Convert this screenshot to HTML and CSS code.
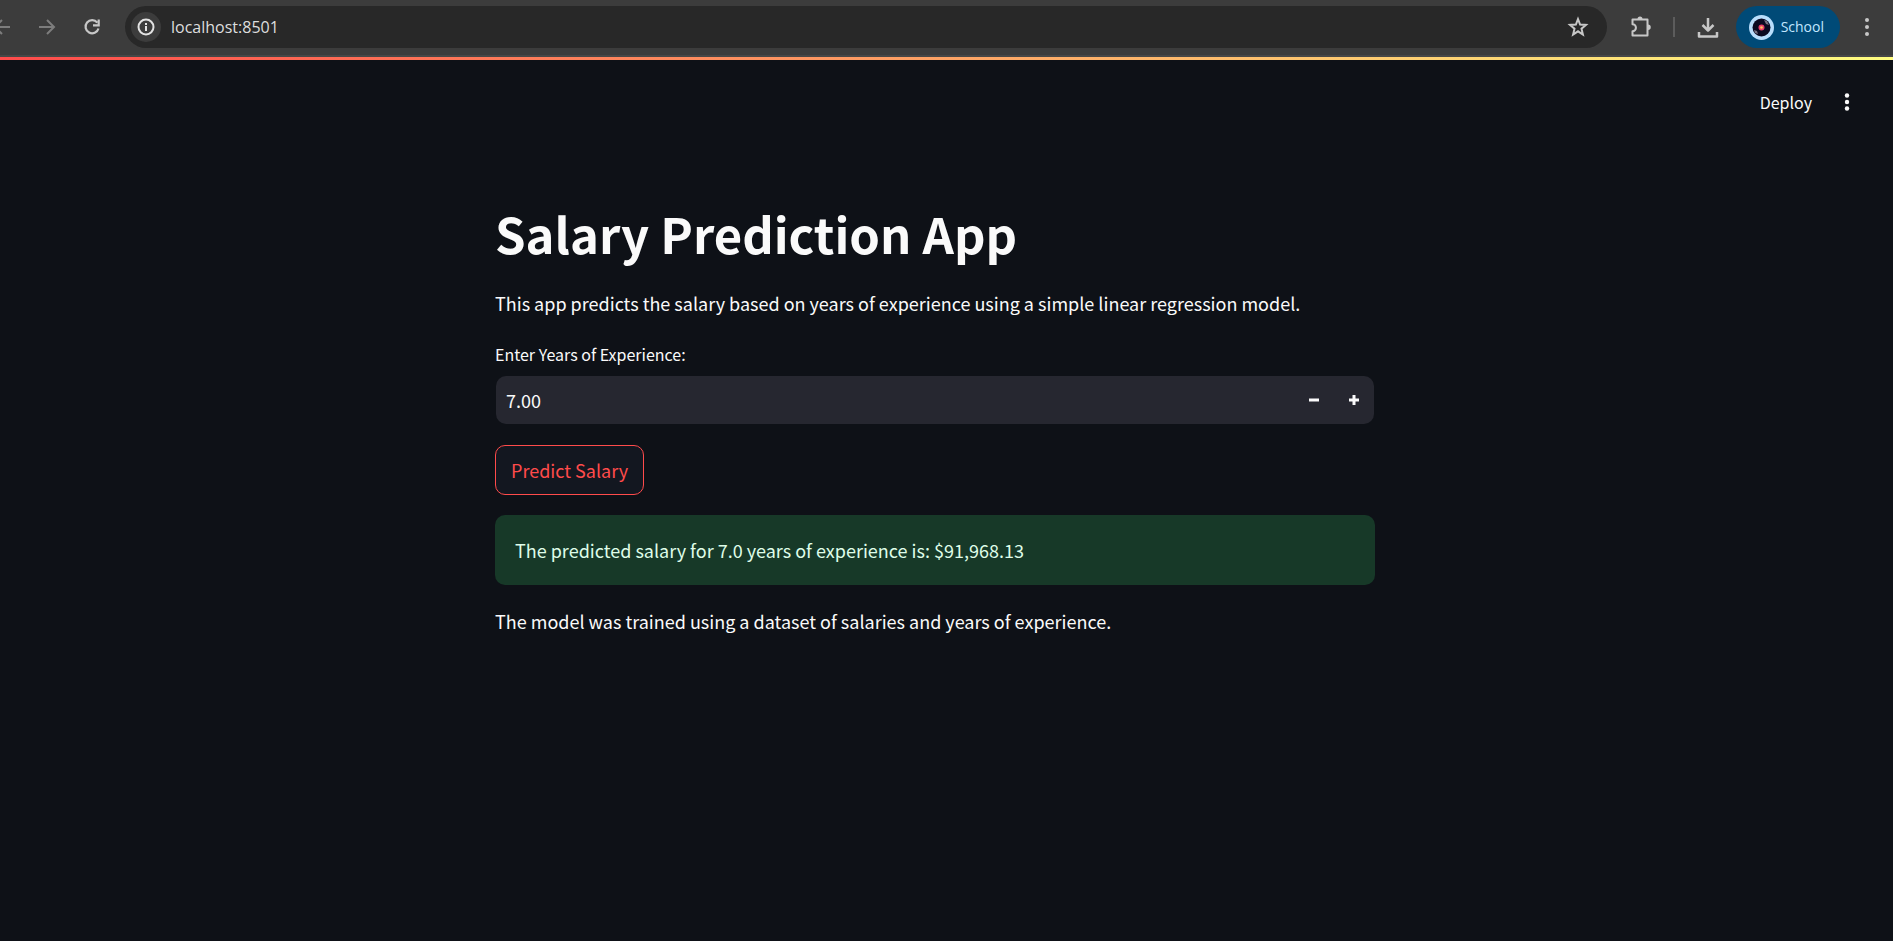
FILE: index.html
```html
<!DOCTYPE html>
<html lang="en">
<head>
<meta charset="utf-8">
<title>Salary Prediction App</title>
<link rel="stylesheet" href="styles.css">
</head>
<body>
<header class="browser-bar">
  <nav class="nav-buttons" aria-label="Navigation">
    <button class="icon-button dim" aria-label="Back"><svg width="20" height="20" viewBox="0 0 20 20"><path d="M18 10H3M10 3L3 10l7 7"/></svg></button>
    <button class="icon-button dim" aria-label="Forward"><svg width="20" height="20" viewBox="0 0 20 20"><path d="M2 10h15M10 3l7 7-7 7"/></svg></button>
    <button class="icon-button" aria-label="Reload"><svg width="20" height="20" viewBox="0 0 20 20"><path d="M15.300 5.600A6.600 6.600 0 1 0 16.500 11.500M16.700 2.500v5.800H11" stroke-width="2.200"/></svg></button>
  </nav>
  <div class="address">
    <button class="site-info" aria-label="Site information"><svg width="18" height="18" viewBox="0 0 18 18"><circle cx="9" cy="9" r="7.500"/><path d="M9 8v5M9 5v2"/></svg></button>
    <input class="url" type="text" aria-label="Address" value="localhost:8501">
    <button class="icon-button" aria-label="Bookmark"><svg width="22" height="22" viewBox="0 0 22 22"><path d="M11 3l2.100 5.500 5.900.4-4.500 3.800 1.400 5.800L11 15.300l-4.900 3.200 1.400-5.800L3 8.900l5.900-.4z"/></svg></button>
  </div>
  <div class="tools">
    <button class="icon-button" aria-label="Extensions"><svg width="24" height="24" viewBox="0 0 24 24"><path d="M3.500 4.500h15V20.500h-15V16.200a3.200 3.200 0 0 0 0-6.900z" stroke-linejoin="round"/><path class="solid" d="M8.500 4a2.500 2.500 0 0 1 5 0zM19 9.500a2.500 2.500 0 0 1 0 5.500z"/></svg></button>
    <span class="divider"></span>
    <button class="icon-button download" aria-label="Downloads"><svg width="22" height="22" viewBox="0 0 22 22" stroke-linejoin="round"><path d="M11 2v12M5.500 9l5.500 5.500L16.500 9M2 16v4.500h18V16" stroke-width="2.500"/></svg></button>
    <button class="profile"><svg width="25" height="25" viewBox="0 0 25 25"><circle cx="12.500" cy="12.500" r="12.500" fill="#b9defc"/><circle cx="12.500" cy="12.500" r="9" fill="#0b0920"/><path d="M15 5l3 1 2 4-3-1zM5 15l3 1 1 3-3-1z" fill="#777180"/><circle cx="12.500" cy="12.500" r="3" fill="#e83e68"/><circle cx="12.500" cy="12.500" r="1.300" fill="#ffc75c"/></svg>School</button>
    <button class="icon-button" aria-label="Browser menu"><svg class="dots" width="20" height="20" viewBox="0 0 20 20"><circle cx="10" cy="3" r="2"/><circle cx="10" cy="10" r="2"/><circle cx="10" cy="17" r="2"/></svg></button>
  </div>
</header>
<div class="decoration"></div>
<div class="app-bar">
  <button class="deploy">Deploy</button>
  <button class="app-menu" aria-label="App menu"><svg class="dots" width="20" height="20" viewBox="0 0 20 20"><circle cx="10" cy="3.500" r="2.200"/><circle cx="10" cy="10" r="2.200"/><circle cx="10" cy="16.500" r="2.200"/></svg></button>
</div>
<main class="page">
  <div class="column">
    <h1 class="title">Salary Prediction App</h1>
    <p class="text">This app predicts the salary based on years of experience using a simple linear regression model.</p>
    <div class="field">
      <label class="label" for="years">Enter Years of Experience:</label>
      <div class="number">
        <input class="value" id="years" type="text" inputmode="decimal" value="7.00">
        <button class="step" aria-label="Decrease"><svg width="10" height="10" viewBox="0 0 10 10"><path d="M0 5h10"/></svg></button>
        <button class="step" aria-label="Increase"><svg width="10" height="10" viewBox="0 0 10 10"><path d="M0 5h10M5 0v10"/></svg></button>
      </div>
    </div>
    <button class="predict">Predict Salary</button>
    <div class="alert" role="alert">The predicted salary for 7.0 years of experience is: $91,968.13</div>
    <p class="text">The model was trained using a dataset of salaries and years of experience.</p>
  </div>
</main>
</body>
</html>
```
FILE: styles.css
```css
* { box-sizing: border-box; }
body {
  margin: 0;
  min-height: 100vh;
  background: #0e1117;
  color: #fafafa;
  font: 18px/32px "Noto Sans CJK SC", "Noto Sans", sans-serif;
  overflow-x: hidden;
}
button, input { font: inherit; color: inherit; border: 0; background: none; padding: 0; }
button { cursor: pointer; }
svg { display: block; fill: none; stroke: currentColor; stroke-width: 2; }
.solid, .dots { fill: currentColor; stroke: none; }

.browser-bar {
  display: flex;
  align-items: center;
  height: 57px;
  padding: 0 16px 1px 0;
  background: #3c3c3c;
  border-bottom: 2px solid #474747;
  color: #c7c7c7;
  font-family: "Open Sans", sans-serif;
}
.icon-button { display: flex; flex: none; }
.dim { color: #7d7d7d; }
.nav-buttons { display: flex; gap: 25px; margin-left: -8px; }
.address {
  display: flex;
  align-items: center;
  flex: 1;
  height: 42px;
  margin-left: 23px;
  padding: 0 18px 0 6px;
  border-radius: 21px;
  background: #282828;
}
.site-info {
  display: flex;
  align-items: center;
  justify-content: center;
  width: 30px;
  height: 30px;
  border-radius: 50%;
  background: #3c3c3c;
  color: #e3e3e3;
}
.url { flex: 1; min-width: 0; margin-left: 10px; font-size: 16px; color: #dedede; }
.tools { display: flex; align-items: center; margin-left: 22px; }
.divider { width: 2px; height: 20px; margin: 0 22px 0 20px; background: #5c5c5c; }
.download { margin-right: 17px; }
.profile {
  display: flex;
  align-items: center;
  gap: 7px;
  height: 42px;
  margin-right: 17px;
  padding: 0 16px 0 13px;
  border-radius: 21px;
  background: #004a77;
  color: #c2e7ff;
  font-size: 14px;
}
.profile svg { stroke: none; }

.decoration { height: 3px; background: linear-gradient(90deg, #ff4b4b, #fffd80); }
.app-bar {
  display: flex;
  align-items: center;
  justify-content: flex-end;
  gap: 25px;
  height: 84px;
  padding-right: 36px;
  font-size: 16px;
}
.app-menu { display: flex; }

.page { padding: 55px 39px 80px 16px; }
.column {
  display: flex;
  flex-direction: column;
  align-items: flex-start;
  gap: 20px;
  max-width: 880px;
  margin: 0 auto;
}
.title { margin: 0; font-size: 49px; line-height: 68px; font-weight: 700; }
.text { margin: 0; }
.field { width: 100%; padding: 3px 1px 1px 0; }
.label { display: block; margin-bottom: 10px; font-size: 16px; line-height: 24px; }
.number {
  display: flex;
  height: 48px;
  margin-left: 1px;
  border-radius: 10px;
  overflow: hidden;
  background: #262730;
}
.value { flex: 1; min-width: 0; padding: 0 10px; }
.step { display: flex; align-items: center; justify-content: center; width: 40px; }
.step svg { stroke-width: 3; }
.predict {
  height: 50px;
  padding: 0 15px;
  border: 1px solid #ff4b4b;
  border-radius: 10px;
  background: #131720;
  color: #ff4b4b;
}
.alert {
  width: 100%;
  padding: 19px 20px;
  border-radius: 10px;
  background: #173928;
  color: #dffde9;
}
```
